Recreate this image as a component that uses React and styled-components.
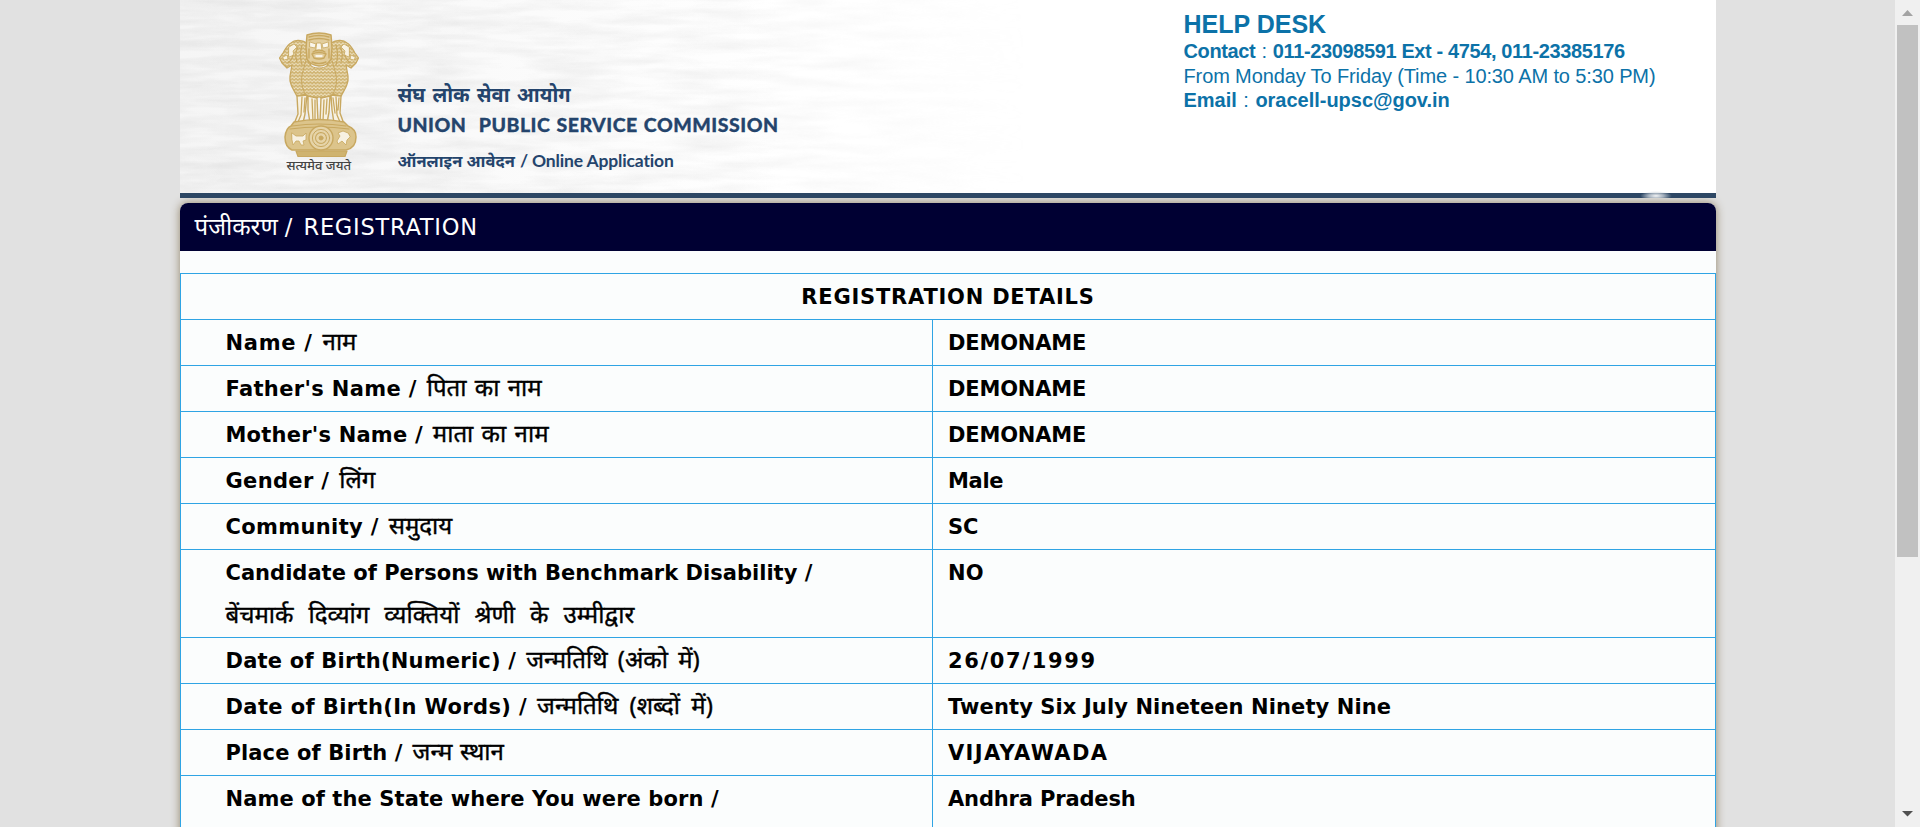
import React from 'react';
import styled, { createGlobalStyle } from 'styled-components';

const line = '#2fa4e4';

const GlobalStyle = createGlobalStyle`
  body { margin: 0; background: #e1e1e1; overflow: hidden; }
  * { box-sizing: border-box; }
`;

const Window = styled.div`
  display: flex;
  height: 827px;
  overflow: hidden;
`;
const Viewport = styled.main`
  flex: 1;
  overflow: hidden;
`;
const Container = styled.div`
  width: 1536px;
  margin: 0 auto;
`;

/* Banner */
const Banner = styled.header`
  position: relative;
  z-index: 1;
  display: flex;
  height: 198px;
  padding-left: 98px;
  background: #fff;
  border-bottom: 5px solid #2d4764;
`;
const Texture = styled.svg`
  position: absolute;
  inset: 0;
`;
const Sparkle = styled.span`
  position: absolute;
  right: 44px;
  bottom: -5px;
  width: 32px;
  height: 7px;
  background: radial-gradient(ellipse at 50% 70%, #f4f5f6 0, rgba(200, 208, 216, 0.75) 35%, transparent 70%);
`;
const EmblemBlock = styled.div`
  position: relative;
  width: 120px;
  padding-top: 32px;
`;
const EmblemSvg = styled.svg`
  display: block;
  width: 82px;
  height: 126px;
`;
const Motto = styled.div`
  width: 82px;
  margin-top: -2px;
  padding-left: 9px;
  font: 500 13px/18px 'Noto Sans', sans-serif;
  color: #444;
  white-space: nowrap;
`;
const Titles = styled.div`
  position: relative;
  flex: 1;
  padding-top: 80px;
  color: #24446c;
  white-space: nowrap;
`;
const HindiTitle = styled.div`
  font: bold 20px/30px 'Noto Sans', sans-serif;
  word-spacing: 2px;
`;
const EnglishTitle = styled.h1`
  margin: 0;
  font: 900 19.5px/30px Lato, sans-serif;
  letter-spacing: 0.5px;
  word-spacing: 1px;
  -webkit-text-stroke: 0.3px #24446c;
`;
const Subtitle = styled.div`
  display: flex;
  align-items: baseline;
  gap: 5px;
  margin-top: 5px;
  font: bold 17.5px/32px Lato, sans-serif;
  letter-spacing: -0.15px;
`;
const SubtitleHindi = styled.span`
  font: bold 16.5px/32px 'Noto Sans', sans-serif;
  letter-spacing: 0;
`;
const HelpDesk = styled.address`
  position: relative;
  width: 532px;
  padding-top: 9px;
  color: #0c72a8;
  font: normal 20px/24px 'Liberation Sans', Arial, sans-serif;
  white-space: nowrap;
`;
const HelpTitle = styled.div`
  font-size: 25px;
  font-weight: bold;
  line-height: 30px;
  letter-spacing: 0;
`;
const HelpLine = styled.div`
  padding-top: ${(p) => p.$top || 0}px;
  letter-spacing: ${(p) => p.$spacing}px;
`;
const Colon = styled.span`
  margin: 0 1px;
`;

/* Registration panel */
const Panel = styled.section`
  margin-top: 5px;
  height: 700px;
  border-radius: 8px 8px 0 0;
  background: #fbfdfd;
  box-shadow: 0 0 10px #93856a;
`;
const PanelTitle = styled.h2`
  margin: 0 0 22px;
  height: 48px;
  padding: 1px 0 0 15px;
  border-radius: 8px 8px 0 0;
  background: #000033;
  color: #fff;
  font: normal 22.5px/46px 'DejaVu Sans', sans-serif;
  white-space: nowrap;
`;
const PanelTitleHindi = styled.span`
  margin-right: 7px;
  font: normal 24px/0 'Noto Sans', sans-serif;
`;
const PanelTitleLatin = styled.span`
  letter-spacing: 0.75px;
  word-spacing: 2.5px;
`;
const Details = styled.div`
  border: 1px solid ${line};
  border-bottom: 0;
  color: #000;
  font: bold 21px/45px 'DejaVu Sans', sans-serif;
  white-space: nowrap;
`;
const DetailsHeading = styled.div`
  height: 46px;
  padding: 1px 0 0 1px;
  border-bottom: 1px solid ${line};
  text-align: center;
  letter-spacing: 0.78px;
`;
const Row = styled.div`
  display: grid;
  grid-template-columns: 751px 1fr;
  height: ${(p) => (p.$double ? 88 : 46)}px;
  border-bottom: 1px solid ${line};
`;
const Label = styled.div`
  padding: 1px 0 0 45px;
`;
const Value = styled.div`
  padding: 1px 0 0 15.5px;
  border-left: 1px solid ${line};
`;
const Latin = styled.span`
  letter-spacing: ${(p) => p.$spacing}px;
`;
const Hindi = styled.span`
  display: ${(p) => (p.$block ? 'block' : 'inline')};
  margin-top: ${(p) => (p.$block ? -3 : 0)}px;
  margin-left: ${(p) => (p.$block ? 0 : 10)}px;
  font: normal 24px/${(p) => (p.$block ? '41px' : 0)} 'Noto Sans', sans-serif;
  -webkit-text-stroke: 0.4px #000;
  word-spacing: ${(p) => p.$word || 0}px;
`;

/* Scrollbar */
const Scrollbar = styled.aside`
  display: flex;
  flex-direction: column;
  align-items: center;
  width: 25px;
  background: #f0f0f0;
`;
const Arrow = styled.svg`
  display: block;
  width: 25px;
  height: 25px;
`;
const Track = styled.div`
  flex: 1;
`;
const Thumb = styled.div`
  width: 21px;
  height: 532px;
  background: #c1c1c1;
`;

const rows = [
  { label: 'Name /', ls: 0.7, hindi: 'नाम', value: 'DEMONAME', vs: -0.18 },
  { label: "Father's Name /", ls: 0.35, hindi: 'पिता का नाम', word: 2.1, value: 'DEMONAME', vs: -0.18 },
  { label: "Mother's Name /", ls: 0.22, hindi: 'माता का नाम', word: 2.1, value: 'DEMONAME', vs: -0.18 },
  { label: 'Gender /', ls: 0.35, hindi: 'लिंग', value: 'Male', vs: -0.3 },
  { label: 'Community /', ls: 0.35, hindi: 'समुदाय', value: 'SC', vs: 0 },
  {
    label: 'Candidate of Persons with Benchmark Disability /', ls: 0.02,
    hindi: 'बेंचमार्क दिव्यांग व्यक्तियों श्रेणी के उम्मीद्वार', word: 8.8, double: true,
    value: 'NO', vs: 0.2,
  },
  { label: 'Date of Birth(Numeric) /', ls: 0.22, hindi: 'जन्मतिथि (अंको में)', word: 4, value: '26/07/1999', vs: 1.65 },
  {
    label: 'Date of Birth(In Words) /', ls: 0.4, hindi: 'जन्मतिथि (शब्दों में)', word: 5,
    value: 'Twenty Six July Nineteen Ninety Nine', vs: 0.1,
  },
  { label: 'Place of Birth /', ls: 0.12, hindi: 'जन्म स्थान', word: 1.4, value: 'VIJAYAWADA', vs: 1.35 },
  { label: 'Name of the State where You were born /', ls: 0.1, value: 'Andhra Pradesh', vs: -0.15, double: true },
];

function Emblem() {
  const gold = '#c8a860';
  return (
    <EmblemSvg viewBox="0 0 82 126" fill="none" stroke={gold} strokeLinecap="round" strokeLinejoin="round">
      <defs>
        <pattern id="mane" width="3.6" height="3.4" patternUnits="userSpaceOnUse">
          <rect width="3.6" height="3.4" fill="#cdb06c" stroke="none" />
          <path d="M0 .6 L1.8 2.4 L3.6 .6" stroke="#efe3c4" strokeWidth=".9" />
        </pattern>
      </defs>
      {/* side lions */}
      <path d="M29 11 C24 8 17 7 13 11 C9 13 7 18 5 21 L1.5 26 L4 31 L9 36 L14 33 L12 44 C11 51 15 57 19 64 L30 62 L33 35 Z" fill="url(#mane)" strokeWidth="1.3" />
      <path d="M53 11 C58 8 65 7 69 11 C73 13 75 18 77 21 L80.5 26 L78 31 L73 36 L68 33 L70 44 C71 51 67 57 63 64 L52 62 L49 35 Z" fill="url(#mane)" strokeWidth="1.3" />
      <path d="M11 15 l5 -3 l3 3 l-4 4 l1 4 l-5 2 Z M5 25 l4 -2 l1 4 l-4 1 Z M71 15 l-5 -3 l-3 3 l4 4 l-1 4 l5 2 Z M77 25 l-4 -2 l-1 4 l4 1 Z" fill="#f8f2e3" strokeWidth=".8" />
      <path d="M10 31 q4 -3 5 -8 M20 15 q-4 7 -1 15 M24 13 q-3 10 0 20 M72 31 q-4 -3 -5 -8 M62 15 q4 7 1 15 M58 13 q3 10 0 20" strokeWidth="1.2" />
      {/* central chest */}
      <path d="M29 25 C30 35 36 36 41 36 C47 36 52 34 53 25 L57 39 C60 49 58 58 54 63 L47 67 L41 65 L35 67 L28 63 C24 57 22 48 25 39 Z" fill="url(#mane)" strokeWidth="1" />
      {/* central head */}
      <path d="M29 3 Q41 -1 53 3 L54 16 L53 27 Q49 34 41 34 Q32 33 29 27 L28 16 Z" fill="#e2cd9c" strokeWidth="1.5" />
      <path d="M32 10 l6 2 l-1 4 l-5 -1 Z M50 10 l-6 2 l1 4 l5 -1 Z M39 11 h4 l1 8 h-6 Z" fill="#faf6ea" strokeWidth=".8" />
      <path d="M31 5 Q41 2 51 5 M31 8 Q41 5 51 8 M35 20 Q41 16 47 20 M34 22 Q41 19 48 22 L46 26 Q41 28 36 26 Z M31 17 v9 M51 17 v9 M34 30 q7 3 14 0" strokeWidth="1.4" />
      <path d="M38 24 h6" stroke="#fff" strokeWidth="1.3" />
      {/* legs */}
      <path d="M19 64 L29 63 L27 82 L25 91 L16 92 L20 82 Z M30 64 L39 66 L40 90 L32 91 L30 78 Z M43 66 L52 64 L51 80 L49 91 L42 91 Z M53 63 L63 64 L62 81 L66 92 L56 91 L54 78 Z" fill="#f7f1e2" strokeWidth="1.4" />
      <path d="M24 65 L23 83 L20 90 M27 66 L26 80 M34 67 L35 89 M37 68 L37 89 M46 68 L45 89 M49 67 L48 82 M58 65 L59 83 L62 90 M55 66 L57 81 M61 66 L60 78" strokeWidth="1.3" />
      {/* abacus */}
      <path d="M16 90 Q41 85 66 90 L70 94 Q78 97 78 105 Q78 116 68 118 L14 118 Q7 115 7 105 Q8 96 13 94 Z" fill="#dcc48b" strokeWidth="1.5" />
      <path d="M14 94 Q41 90 68 94 M12 97 Q41 93 71 97" strokeWidth="1.2" />
      <path d="M14 101 l4 3 h7 l3 -3 v7 l-3 1 l1 4 h-3 l-2 -4 h-3 l-3 4 l-1 -5 Z M70 101 l-5 -2 l-5 2 l2 3 l-3 5 l1 3 l4 -3 l4 4 l1 -5 l3 -3 Z" fill="#f7f1e2" strokeWidth=".8" />
      <circle cx="43" cy="106" r="12" fill="#e6d4a8" strokeWidth="1.4" />
      <circle cx="43" cy="106" r="8.6" strokeWidth="1" />
      <circle cx="43" cy="106" r="5.4" strokeWidth="1.1" strokeDasharray="1.2 .8" />
      <circle cx="43" cy="106" r="2" fill={gold} />
      <path d="M18 119 H69 L67 124.5 H20 Z" fill="#cfb36f" strokeWidth="1.2" />
    </EmblemSvg>
  );
}

function WavyTexture() {
  return (
    <Texture width="1536" height="193" aria-hidden="true">
      <defs>
        <filter id="waves" x="0" y="0" width="100%" height="100%" colorInterpolationFilters="sRGB">
          <feTurbulence type="fractalNoise" baseFrequency="0.014 0.1" numOctaves="3" seed="8" />
          <feColorMatrix values="0 0 0 0 .72  0 0 0 0 .72  0 0 0 0 .72  .42 0 0 0 -.13" />
        </filter>
        <linearGradient id="fade">
          <stop offset="0" stopColor="#fff" />
          <stop offset=".6" stopColor="#fff" stopOpacity=".7" />
          <stop offset="1" stopColor="#fff" stopOpacity="0" />
        </linearGradient>
        <linearGradient id="shade">
          <stop offset="0" stopColor="#f5f5f5" />
          <stop offset="1" stopColor="#fff" />
        </linearGradient>
        <mask id="fadeMask">
          <rect width="850" height="193" fill="url(#fade)" />
        </mask>
      </defs>
      <rect width="600" height="193" fill="url(#shade)" />
      <g mask="url(#fadeMask)">
        <rect width="850" height="193" filter="url(#waves)" />
      </g>
    </Texture>
  );
}

export default function App() {
  return (
    <Window>
      <GlobalStyle />
      <Viewport>
        <Container>
          <Banner>
            <WavyTexture />
            <EmblemBlock>
              <Emblem />
              <Motto>सत्यमेव जयते</Motto>
            </EmblemBlock>
            <Titles>
              <HindiTitle>संघ लोक सेवा आयोग</HindiTitle>
              <EnglishTitle>UNION&nbsp; PUBLIC SERVICE COMMISSION</EnglishTitle>
              <Subtitle>
                <SubtitleHindi>ऑनलाइन आवेदन</SubtitleHindi>
                <span>/ Online Application</span>
              </Subtitle>
            </Titles>
            <HelpDesk>
              <HelpTitle>HELP DESK</HelpTitle>
              <HelpLine $spacing={-0.38}>
                <b>Contact</b> <Colon>:</Colon> <b>011-23098591 Ext - 4754, 011-23385176</b>
              </HelpLine>
              <HelpLine $spacing={-0.12} $top={0.5}>From Monday To Friday (Time - 10:30 AM to 5:30 PM)</HelpLine>
              <HelpLine $spacing={-0.02}>
                <b>Email</b> <Colon>:</Colon> <b>oracell-upsc@gov.in</b>
              </HelpLine>
            </HelpDesk>
            <Sparkle />
          </Banner>
          <Panel>
            <PanelTitle>
              <PanelTitleHindi>पंजीकरण</PanelTitleHindi>
              <PanelTitleLatin>/ REGISTRATION</PanelTitleLatin>
            </PanelTitle>
            <Details>
              <DetailsHeading>REGISTRATION DETAILS</DetailsHeading>
              {rows.map((r) => (
                <Row key={r.label} $double={r.double}>
                  <Label>
                    <Latin $spacing={r.ls}>{r.label}</Latin>
                    {r.hindi && <Hindi $block={r.double} $word={r.word}>{r.hindi}</Hindi>}
                  </Label>
                  <Value>
                    <Latin $spacing={r.vs}>{r.value}</Latin>
                  </Value>
                </Row>
              ))}
            </Details>
          </Panel>
        </Container>
      </Viewport>
      <Scrollbar>
        <Arrow viewBox="0 0 25 25"><path d="M7 16 L12.5 10 L18 16 Z" fill="#a3a3a3" /></Arrow>
        <Track>
          <Thumb />
        </Track>
        <Arrow viewBox="0 0 25 25"><path d="M7 9 H18 L12.5 14.5 Z" fill="#505050" /></Arrow>
      </Scrollbar>
    </Window>
  );
}
